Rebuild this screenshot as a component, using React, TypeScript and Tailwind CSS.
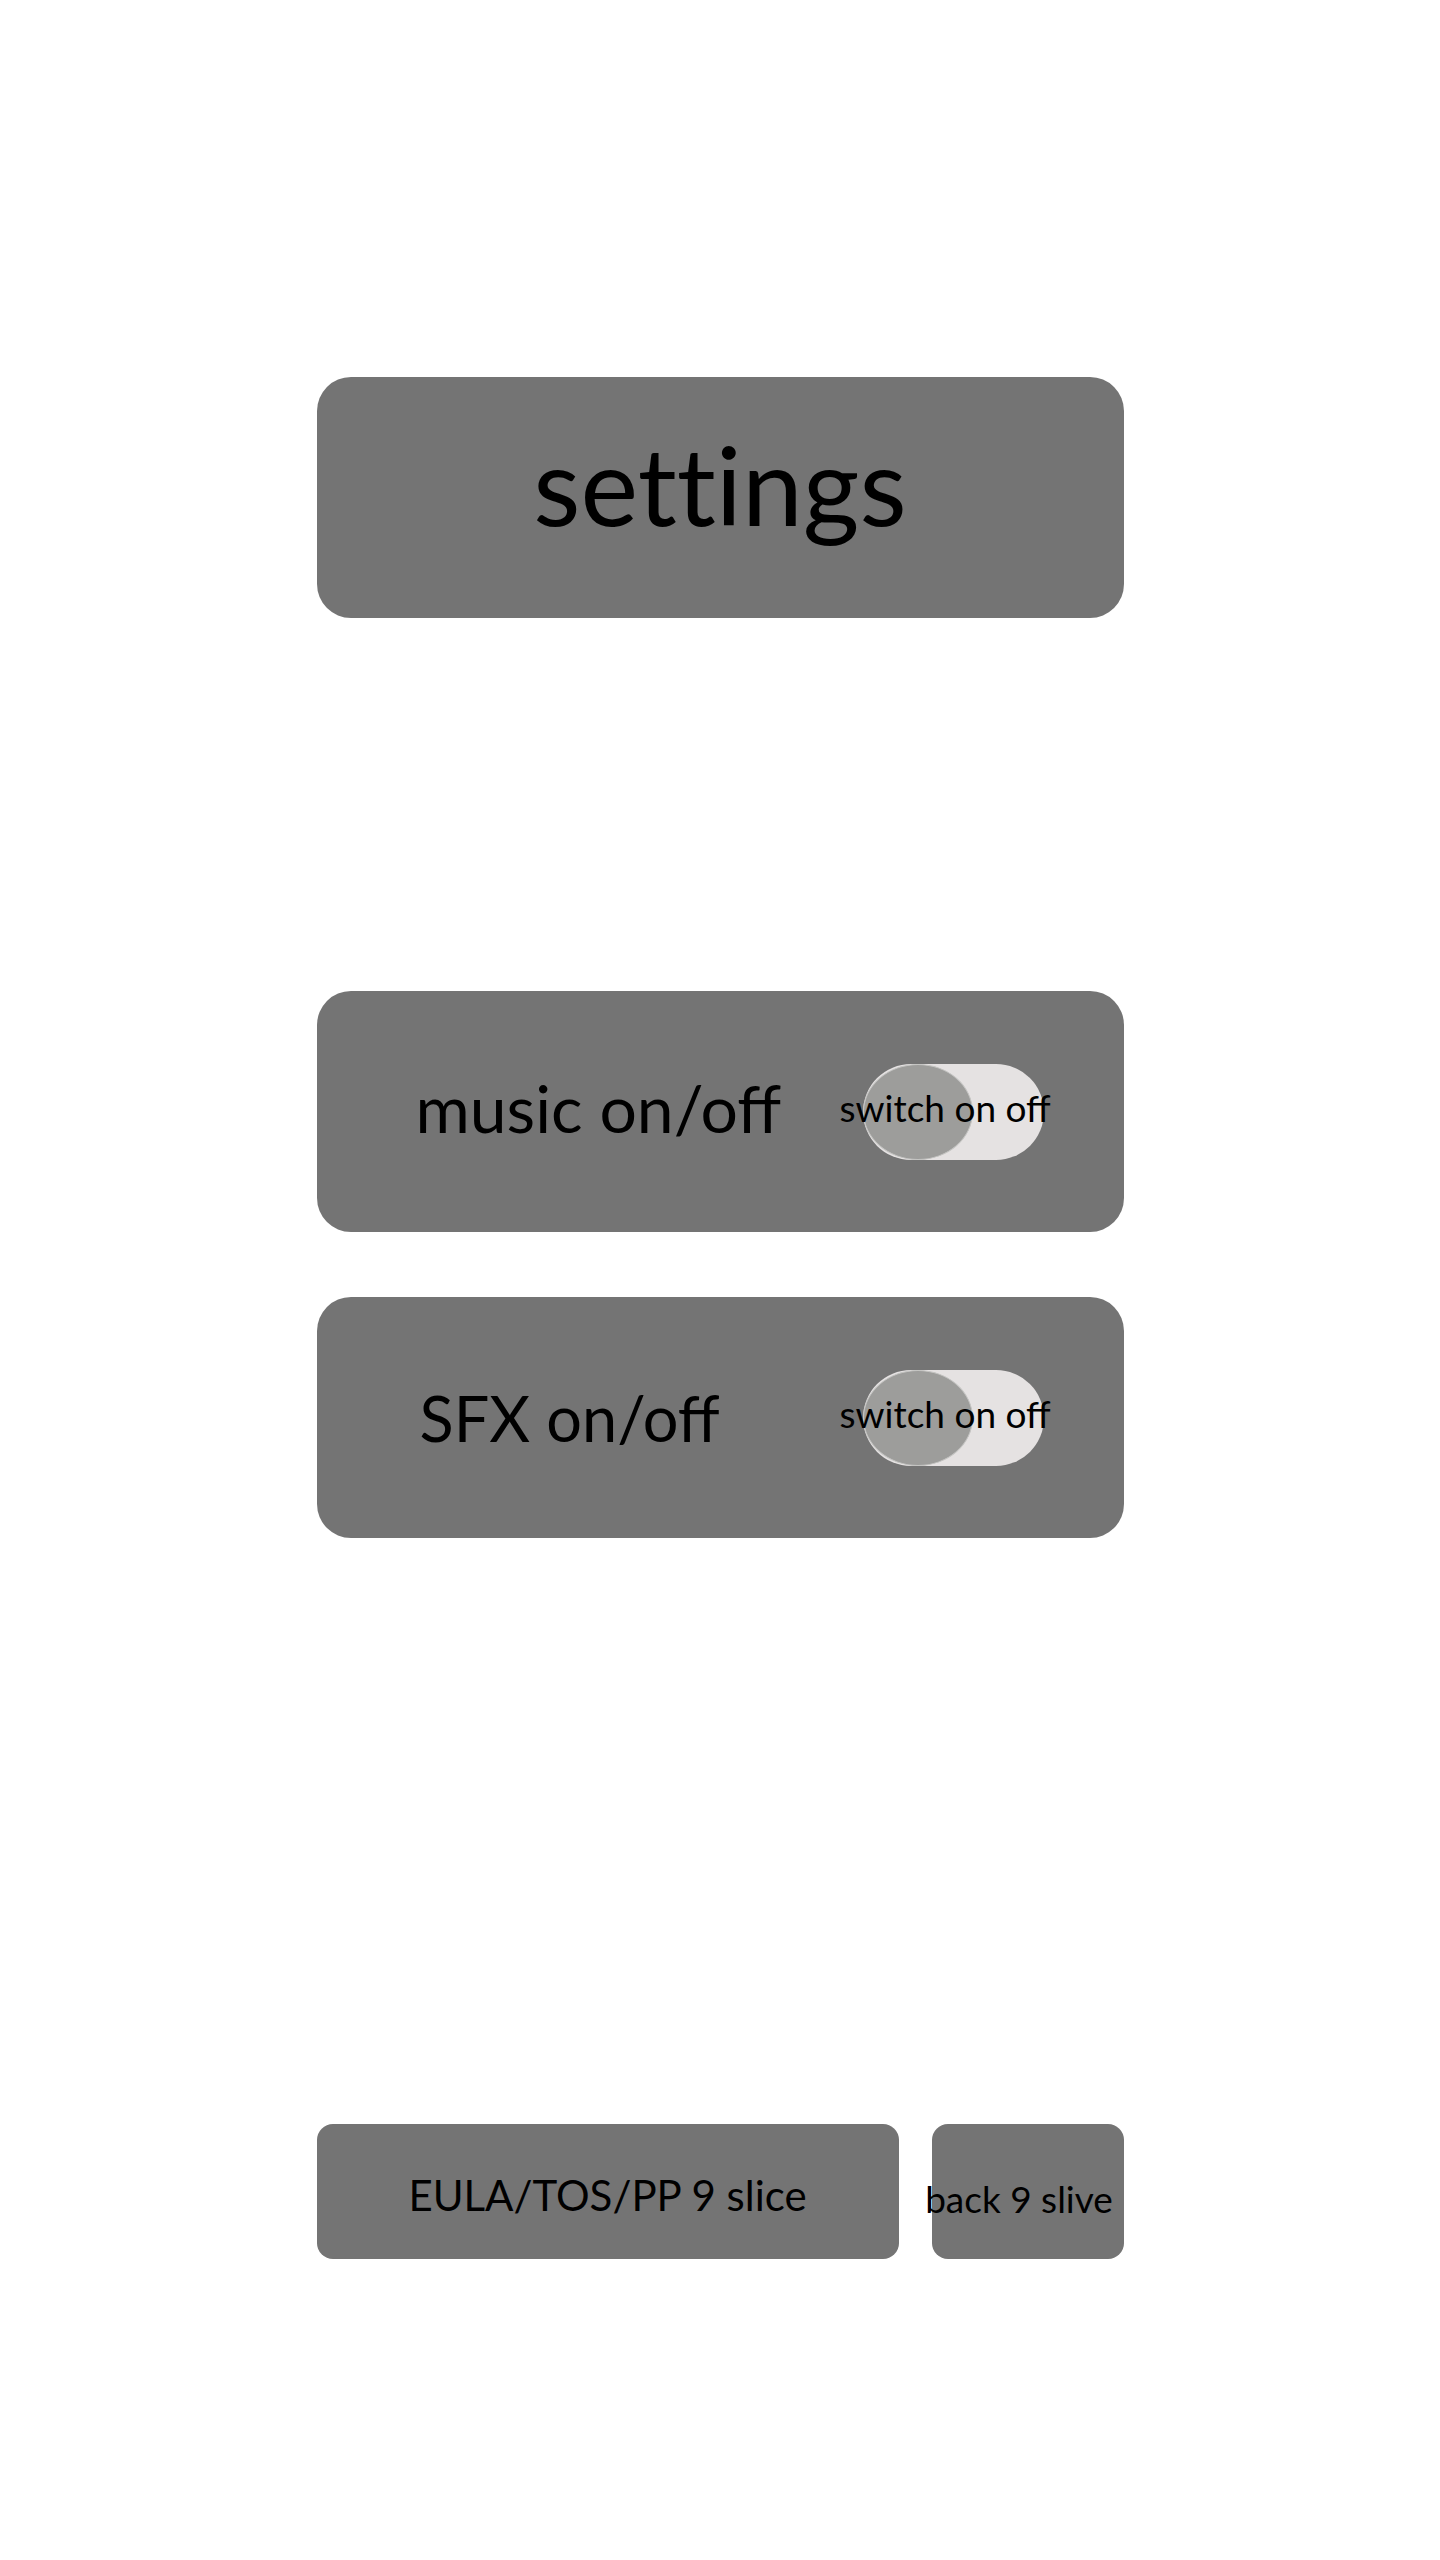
import React from "react"

const font = { fontFamily: "Lato, 'Liberation Sans', sans-serif" }

function Toggle() {
  return (
    <div className="relative w-[181px] h-[96px] rounded-full bg-[#e5e2e2] shrink-0">
      <div className="absolute left-0 top-0 w-[110px] h-[96px] rounded-[50%] bg-[#9d9d9b] border border-[#c4c4c2]" />
      <span className="absolute left-[-23px] top-[25px] text-[37px] leading-none text-black whitespace-nowrap">
        switch on off
      </span>
    </div>
  )
}

export default function App() {
  return (
    <div className="min-h-[2560px] bg-white" style={font}>
      <div className="w-[807px] mx-auto pt-[377px] flex flex-col">
        {/* title */}
        <div className="h-[241px] rounded-[34px] bg-[#747474] flex items-center justify-center pb-[29px]">
          <h1 className="text-[109px] leading-none text-black [font-variant-ligatures:none]">settings</h1>
        </div>

        {/* toggles */}
        <div className="mt-[373px] h-[241px] rounded-[34px] bg-[#747474] flex items-center pl-[99px] pr-[80px]">
          <span className="text-[66px] leading-none text-black mb-[7px] whitespace-nowrap">music on/off</span>
          <div className="ml-auto">
            <Toggle />
          </div>
        </div>

        <div className="mt-[65px] h-[241px] rounded-[34px] bg-[#747474] flex items-center pl-[103px] pr-[80px]">
          <span className="text-[63px] leading-none text-black whitespace-nowrap">SFX on/off</span>
          <div className="ml-auto">
            <Toggle />
          </div>
        </div>

        {/* bottom buttons */}
        <div className="mt-[586px] flex gap-[33px]">
          <div className="w-[582px] h-[135px] rounded-[16px] bg-[#747474] flex items-center justify-center">
            <span className="text-[42px] leading-none text-black mt-[6px] whitespace-nowrap">EULA/TOS/PP 9 slice</span>
          </div>
          <div className="w-[192px] h-[135px] rounded-[16px] bg-[#747474] flex items-center justify-center">
            <span className="text-[37px] leading-none text-black mt-[14px] mr-[17px] whitespace-nowrap">back 9 slive</span>
          </div>
        </div>
      </div>
    </div>
  )
}
